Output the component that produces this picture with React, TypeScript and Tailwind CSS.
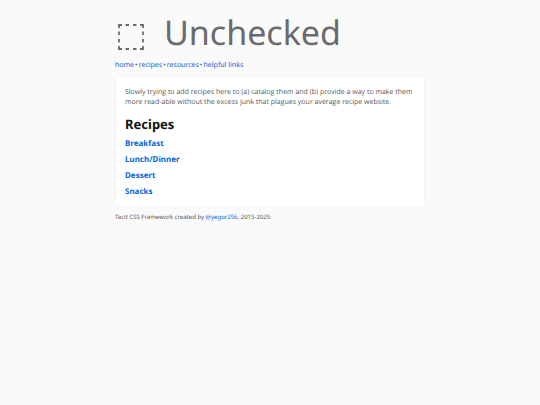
const sections = ["Breakfast", "Lunch/Dinner", "Dessert", "Snacks"];
const nav = ["home", "recipes", "resources", "helpful links"];

export default function App() {
  return (
    <div className="min-h-screen bg-[#fafafa] font-['Noto_Sans',sans-serif] text-[#595959] [text-rendering:geometricPrecision]">
      <div className="mx-auto max-w-[310px] pt-[11px]">
        <header>
          <h1 className="flex h-[42px] items-center gap-[19px] text-[34px] text-[#6b6b6b]">
            <svg className="mt-2 h-[30px] w-[30px] shrink-0" viewBox="0 0 30 30" fill="none" stroke="currentColor" strokeWidth="1.8" aria-hidden="true">
              <path d="M4 7V4h3M25 4h3v3M28 25v3h-3M7 28H4v-3M10.500 4h3.500M18 4h3.500M10.500 28h3.500M18 28h3.500M4 10.500v3.500M4 18v3.500M28 10.500v3.500M28 18v3.500" />
            </svg>
            Unchecked
          </h1>
          <nav className="mt-[5px] flex text-[7px] leading-4">
            {nav.map((item, i) => (
              <span key={item}>
                {i > 0 && <span className="mx-px">•</span>}
                <a href="#" className="text-[#0366e0]">{item}</a>
              </span>
            ))}
          </nav>
        </header>
        <main className="mt-0.5 rounded-xs border border-[#f5f5f5] bg-white px-[9px] pt-[11px] pb-[6px]">
          <p className="font-['Open_Sans','Noto_Sans',sans-serif] text-[7px] leading-[10px]">
            Slowly trying to add recipes here to (a) catalog them and (b) provide a way to make them more read-able without the excess junk that plagues your average recipe website.
          </p>
          <h2 className="mt-[6px] text-[13px] font-bold leading-5 text-[#111]">Recipes</h2>
          <ul className="mt-0.5">
            {sections.map((s) => (
              <li key={s} className="h-4 text-[8px] font-bold leading-4">
                <a href="#" className="text-[#0366e0]">{s}</a>
              </li>
            ))}
          </ul>
        </main>
        <footer className="mt-[6px] text-[6px] leading-2">
          Tacit CSS Framework created by <a href="#" className="text-[#0366e0]">@yegor256</a>, 2015-2025
        </footer>
      </div>
    </div>
  );
}
